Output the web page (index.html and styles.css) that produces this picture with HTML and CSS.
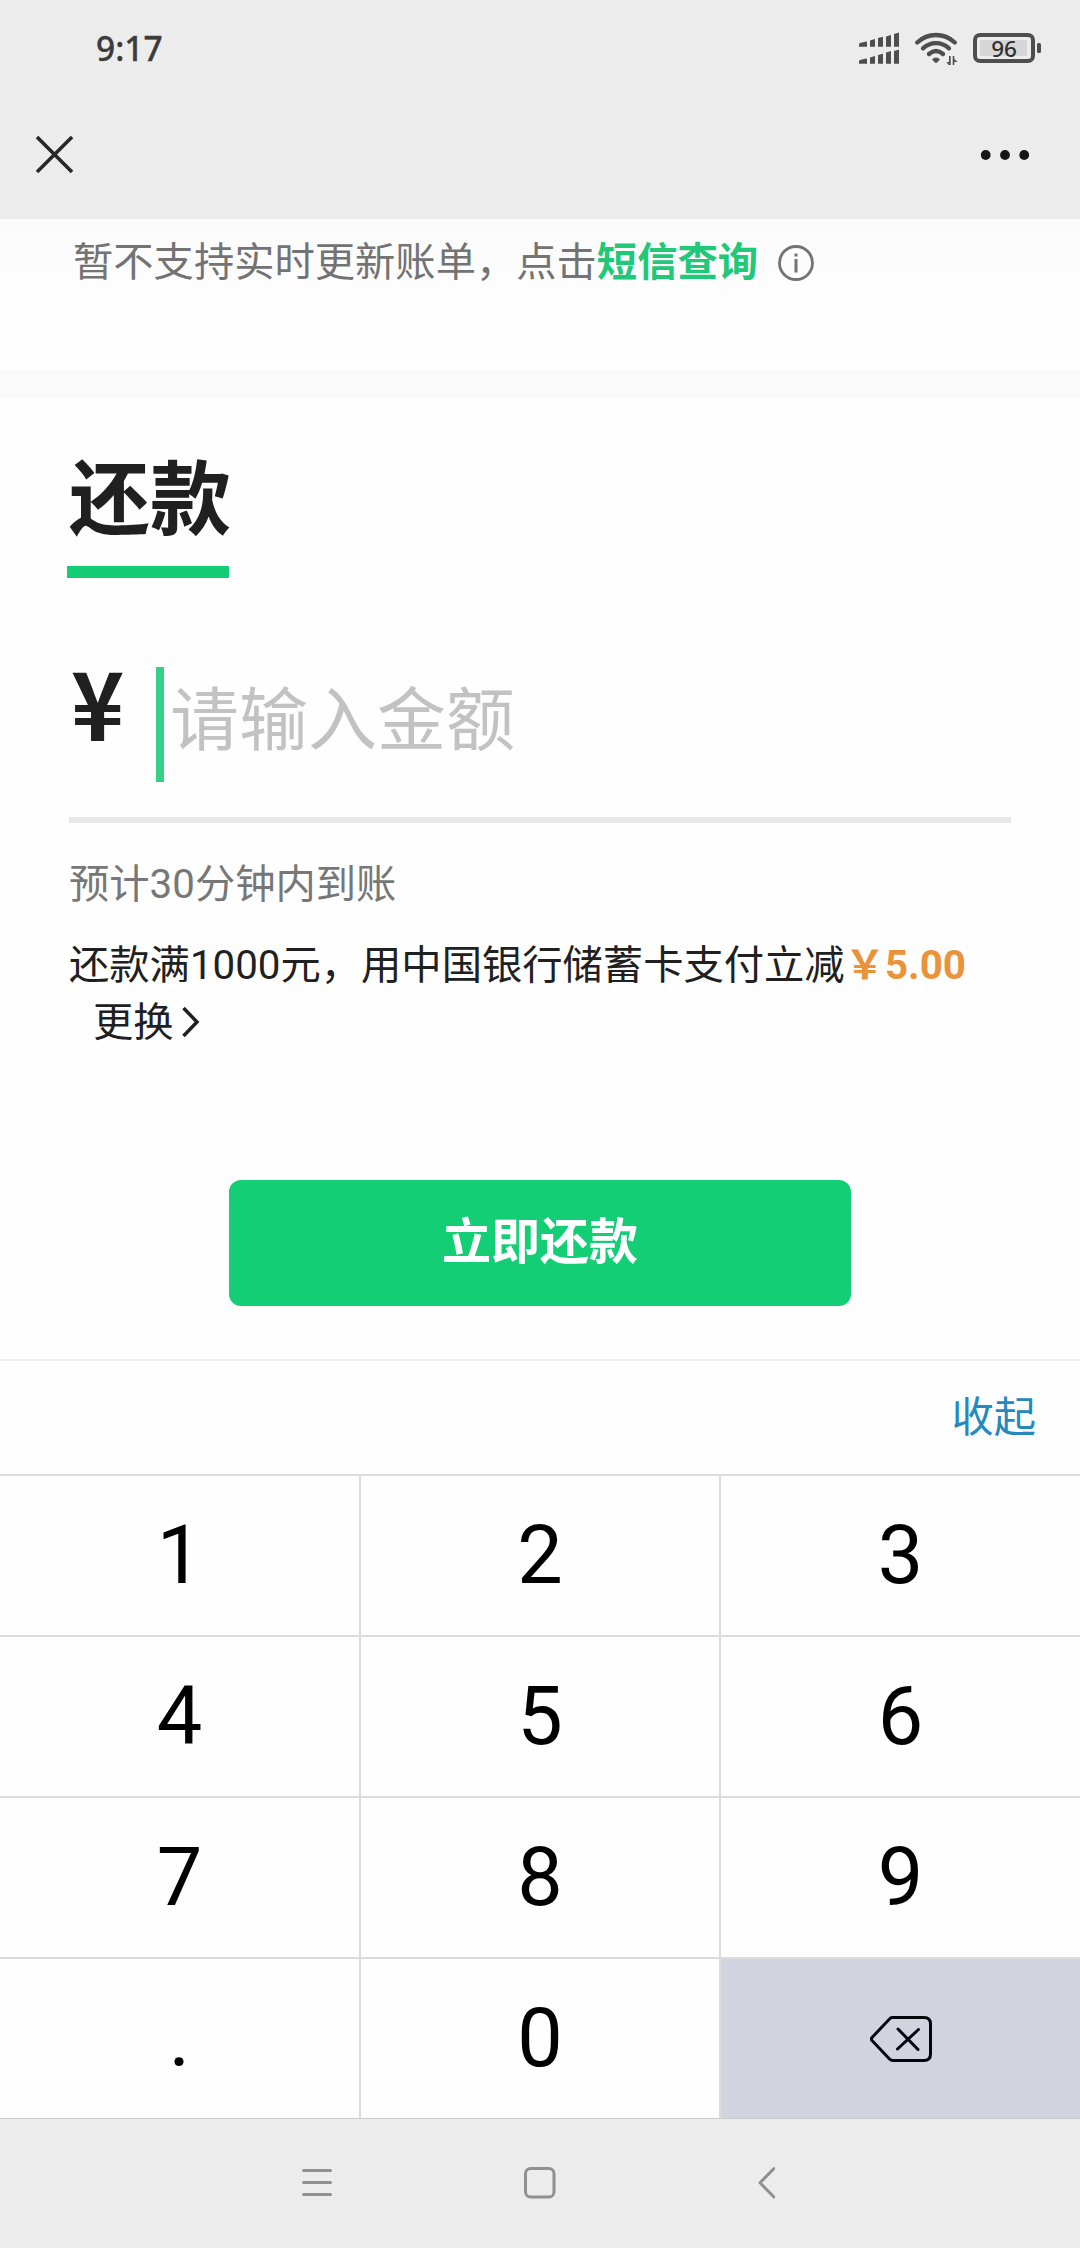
FILE: index.html
```html
<!DOCTYPE html>
<html lang="zh-CN">
<head>
<meta charset="utf-8">
<title>还款</title>
<link rel="stylesheet" href="styles.css">
</head>
<body>
<header class="top">
  <div class="status">
    <span class="time">9:17</span>
    <svg class="signals" width="182" height="34" viewBox="859 30 182 34" fill="#4e4e4e">
      <path d="M860 42 866 40.5Q867 40.500 867 41.500V45.7H859V43ZM870 39.500 875 38V45.7H870ZM878 37 883 35.700V45.7H878ZM886 35.500 891 34V45.7H886ZM894 33 899 31.500V45.7H894Z"/>
      <path d="M860 59 866 57.500Q867 57.500 867 58.500V62.7H859V60ZM870 56.500 875 55V62.7H870ZM878 54 883 52.700V62.7H878ZM886 51.500 891 50V62.7H886ZM894 50 899 48.500V62.7H894Z"/>
      <g fill="none" stroke="#4e4e4e" stroke-width="4.300" stroke-linecap="round">
        <path d="M917.2 41.5C928 31.5 944 31.5 954.8 41.5M923 47.3C930.5 40.5 941.5 40.5 949 47.3M929 53C933.5 49.2 938.5 49.2 943 53"/>
      </g>
      <path d="M932 58.5Q936 54.5 940 58.5L937 61.5Q936 62.3 935 61.5Z"/>
      <path d="M949 55H950.7V64.500H949L946.500 61H949ZM952.700 64.500V55H954.300V58L957.500 61H954.300V64.500Z"/>
      <rect x="975" y="34" width="58" height="26" rx="5" fill="none" stroke="#4e4e4e" stroke-width="4"/>
      <rect x="980" y="39" width="47" height="16" fill="#d6d6d6"/>
      <rect x="1037" y="42" width="4" height="10" rx="1.500"/>
      <text class="level" x="1004" y="55.500" text-anchor="middle">96</text>
    </svg>
  </div>
  <div class="nav">
    <svg width="38" height="38" viewBox="0 0 38 38" stroke="#282828" stroke-width="3.600"><path d="M1 1 36 36M36 1 1 36"/></svg>
    <svg width="50" height="12" viewBox="0 0 50 12" fill="#161616"><circle cx="5.700" cy="6" r="4.900"/><circle cx="25" cy="6" r="4.900"/><circle cx="44.200" cy="6" r="4.900"/></svg>
  </div>
</header>
<section class="notice">
  <span>暂不支持实时更新账单，点击<b>短信查询</b></span>
  <svg class="info" width="36" height="36" viewBox="0 0 36 36"><circle cx="18" cy="18" r="16.500" fill="none" stroke="#737373" stroke-width="2.800"/><path d="M16.500 8.500H19.500V11.500H16.500ZM16.500 14H19.500V27.500H16.500Z" fill="#737373"/></svg>
</section>
<main class="repay">
  <h1 class="title">还款</h1>
  <div class="amount">
    <span class="yen">¥</span>
    <span class="caret"></span>
    <span class="placeholder">请输入金额</span>
  </div>
  <p class="eta">预计30分钟内到账</p>
  <p class="offer">还款满1000元，用中国银行储蓄卡支付立减<b>￥5.00</b><br><a class="change">更换<svg width="18" height="32" viewBox="0 0 18 32" fill="none" stroke="#202020" stroke-width="3.500"><path d="M1.500 1 15 15 1.500 29"/></svg></a></p>
  <button class="pay">立即还款</button>
</main>
<section class="keyboard">
  <div class="tools"><span>收起</span></div>
  <div class="keys">
    <span>1</span><span>2</span><span>3</span>
    <span>4</span><span>5</span><span>6</span>
    <span>7</span><span>8</span><span>9</span>
    <span>.</span><span>0</span>
    <span class="delete"><svg width="62" height="46" viewBox="0 0 62 46" fill="none" stroke="#05050c" stroke-width="3" stroke-linecap="round" stroke-linejoin="round"><path d="M22 1.500H54Q60.500 1.500 60.500 8V38Q60.500 44.500 54 44.500H23Q21 44.500 19.500 43L2 24.500Q.8 23 2 21.500L20 2.500Q21 1.500 22 1.500ZM28 13 48 33.500M48.500 13.500 27.500 33"/></svg></span>
  </div>
</section>
<footer class="system">
  <svg width="474" height="34" viewBox="301 2166 474 34" fill="none" stroke="#909090" stroke-width="3" stroke-linecap="round" stroke-linejoin="round"><path d="M303.500 2170.500H330.500M303.500 2182.500H330.500M303.500 2194.500H330.500"/><rect x="525.500" y="2168.500" width="28.500" height="28.500" rx="5"/><path d="M774 2168.500 760 2182.800 774 2197"/></svg>
</footer>
</body>
</html>
```
FILE: styles.css
```css
* { box-sizing: border-box; }
body {
  margin: 0;
  width: 1080px;
  height: 2248px;
  display: flex;
  flex-direction: column;
  overflow: hidden;
  background: #fefefe;
  color: #202020;
  font-family: Roboto, "Noto Sans CJK SC", sans-serif;
  font-size: 40.3px;
}
h1, p { margin: 0; }
svg { display: block; flex: none; }

.top { height: 219px; background: #ececec; }
.status {
  height: 96px;
  padding: 0 39px 0 96px;
  display: flex;
  justify-content: space-between;
  align-items: center;
}
.time { padding-bottom: 1px; font: 500 33.5px/48px "Noto Sans", sans-serif; color: #3c3c3c; -webkit-text-stroke: .3px #3c3c3c; }
.level { font: 500 22.5px "Noto Sans", sans-serif; fill: #303030; }
.nav {
  height: 117px;
  padding: 0 50px 0 36px;
  display: flex;
  justify-content: space-between;
  align-items: center;
}

.notice {
  height: 151px;
  padding: 16px 0 0 73px;
  display: flex;
  align-items: flex-start;
  color: #737373;
  line-height: 56px;
  background: linear-gradient(#fbfbfb, #fefefe 100px);
}
.notice b { color: #20c878; }
.info { margin: 10px 0 0 20px; }

.repay {
  height: 989px;
  padding: 55px 69px 0;
  border-top: 28px solid #fafafa;
}
.title {
  width: 162px;
  height: 125px;
  margin-left: -2px;
  padding-left: 2px;
  border-bottom: 12px solid #14cc74;
  font-size: 81px;
  line-height: 96px;
  white-space: nowrap;
}
.amount {
  height: 245px;
  padding-top: 89px;
  border-bottom: 6px solid #e9e9e9;
  display: flex;
}
.yen {
  width: 87px;
  padding-left: 2px;
  margin-top: -17px;
  font: 700 95px/100px "Noto Sans CJK SC", sans-serif;
  transform: scaleX(.95);
  transform-origin: 0 0;
}
.caret { width: 8px; height: 115px; background: #34d088; }
.placeholder {
  margin: 5px 0 0 6px;
  font-size: 69px;
  line-height: 100px;
  color: #c2c2c2;
}
.eta { margin-top: 34px; line-height: 56px; color: #777; }
.offer { margin-top: 24px; line-height: 57px; white-space: nowrap; }
.offer b { color: #ea933a; }
.change { display: inline-flex; align-items: center; gap: 8px; margin-left: 24px; }
.pay {
  display: block;
  width: 622px;
  height: 126px;
  margin: 129px auto 0;
  padding: 0;
  border: 0;
  border-radius: 12px;
  background: #14ce76;
  color: #fff;
  font: 700 49px/120px Roboto, "Noto Sans CJK SC", sans-serif;
}

.keyboard { background: #fefefe; border-top: 2px solid #f0f0f0; }
.tools {
  height: 113px;
  padding: 0 44px 8px 0;
  display: flex;
  align-items: center;
  justify-content: flex-end;
  font-size: 42.3px;
  color: #2589bd;
}
.keys {
  display: grid;
  grid-template-columns: 359px 358px 359px;
  grid-auto-rows: 159px;
  gap: 2px;
  padding-top: 2px;
  background: #dcdcdc;
  border-bottom: 1px solid #ccc;
}
.keys span {
  display: flex;
  align-items: center;
  justify-content: center;
  background: #fefefe;
  color: #000;
  font-size: 81px;
}
.keys .delete { background: #d1d4de; }
.system {
  flex: 1;
  background: #ececec;
  padding: 47px 0 0 301px;
}
```
